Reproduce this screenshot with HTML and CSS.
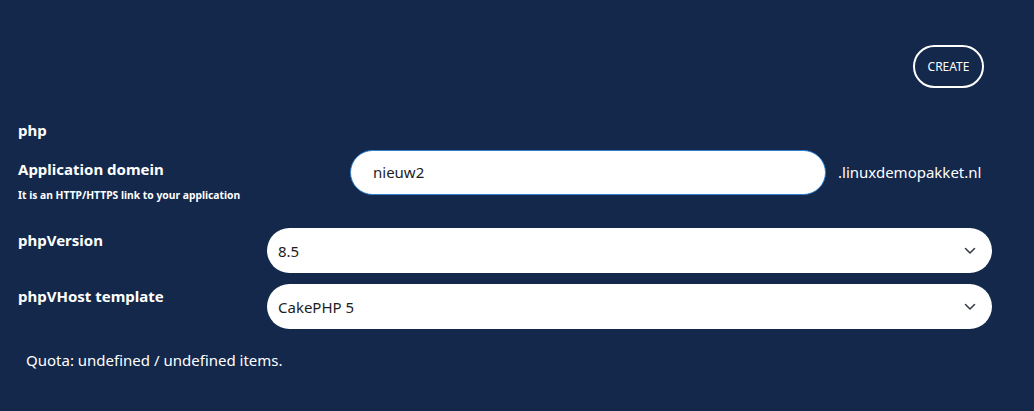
FILE: index.html
```html
<!DOCTYPE html>
<html>
<head>
<meta charset="utf-8">
<link rel="stylesheet" href="styles.css">
</head>
<body>
<div class="page">
  <div class="toolbar">
    <button class="create-btn">CREATE</button>
  </div>
  <div class="section-title">php</div>
  <div class="row domain-row">
    <div class="label-col">
      <div class="label">Application domein</div>
      <div class="hint">It is an HTTP/HTTPS link to your application</div>
    </div>
    <div class="text-input">nieuw2</div>
    <div class="suffix">.linuxdemopakket.nl</div>
  </div>
  <div class="row select-row">
    <div class="label-col"><div class="label">phpVersion</div></div>
    <div class="select">
      <span>8.5</span>
      <svg class="chev" width="12" height="8" viewBox="0 0 12 8"><path d="M1.5 1.5 L6 6 L10.5 1.5" fill="none" stroke="#3a3f4a" stroke-width="1.6" stroke-linecap="round" stroke-linejoin="round"/></svg>
    </div>
  </div>
  <div class="row select-row">
    <div class="label-col"><div class="label">phpVHost template</div></div>
    <div class="select">
      <span>CakePHP 5</span>
      <svg class="chev" width="12" height="8" viewBox="0 0 12 8"><path d="M1.5 1.5 L6 6 L10.5 1.5" fill="none" stroke="#3a3f4a" stroke-width="1.6" stroke-linecap="round" stroke-linejoin="round"/></svg>
    </div>
  </div>
  <div class="quota">Quota: undefined / undefined items.</div>
</div>
</body>
</html>
```
FILE: styles.css
```css
html, body {
  margin: 0;
  padding: 0;
  background: #13284b;
  height: 100%;
}
body {
  font-family: "Noto Sans", "Open Sans", sans-serif;
  color: #ffffff;
}
.page {
  padding: 45px 42px 0 18px;
}
.toolbar {
  display: flex;
  justify-content: flex-end;
  padding-right: 8px;
}
.create-btn {
  height: 43px;
  width: 71px;
  border: 2px solid #ffffff;
  border-radius: 22px;
  background: transparent;
  color: #ffffff;
  font-family: "Noto Sans", sans-serif;
  font-size: 12px;
  padding: 0;
}
.section-title {
  margin-top: 32px;
  font-weight: 700;
  font-size: 15px;
  line-height: 20px;
}
.row {
  display: flex;
  align-items: flex-start;
}
.domain-row {
  margin-top: 10px;
  height: 45px;
}
.domain-row .label-col {
  width: 332px;
  padding-top: 9px;
}
.label {
  font-weight: 700;
  font-size: 15px;
  line-height: 20px;
}
.hint {
  font-weight: 700;
  font-size: 10.3px;
  line-height: 14px;
  margin-top: 9px;
}
.text-input {
  box-sizing: border-box;
  width: 476px;
  height: 45px;
  border: 1px solid #2f7fd0;
  border-radius: 23px;
  background: #ffffff;
  color: #1d1d1d;
  font-size: 15px;
  line-height: 43px;
  padding-left: 22px;
}
.suffix {
  margin-left: 12px;
  font-size: 15px;
  line-height: 45px;
}
.select-row {
  margin-top: 33px;
  height: 45px;
}
.select-row + .select-row {
  margin-top: 11px;
}
.select-row .label-col {
  width: 249px;
  padding-top: 2px;
}
.select {
  flex: 1;
  box-sizing: border-box;
  height: 45px;
  border-radius: 23px;
  background: #ffffff;
  color: #1d1d1d;
  font-size: 15px;
  display: flex;
  align-items: center;
  justify-content: space-between;
  padding: 0 16px 0 11px;
}
.quota {
  margin-top: 21px;
  padding-left: 8px;
  font-size: 15px;
  line-height: 20px;
}
```
